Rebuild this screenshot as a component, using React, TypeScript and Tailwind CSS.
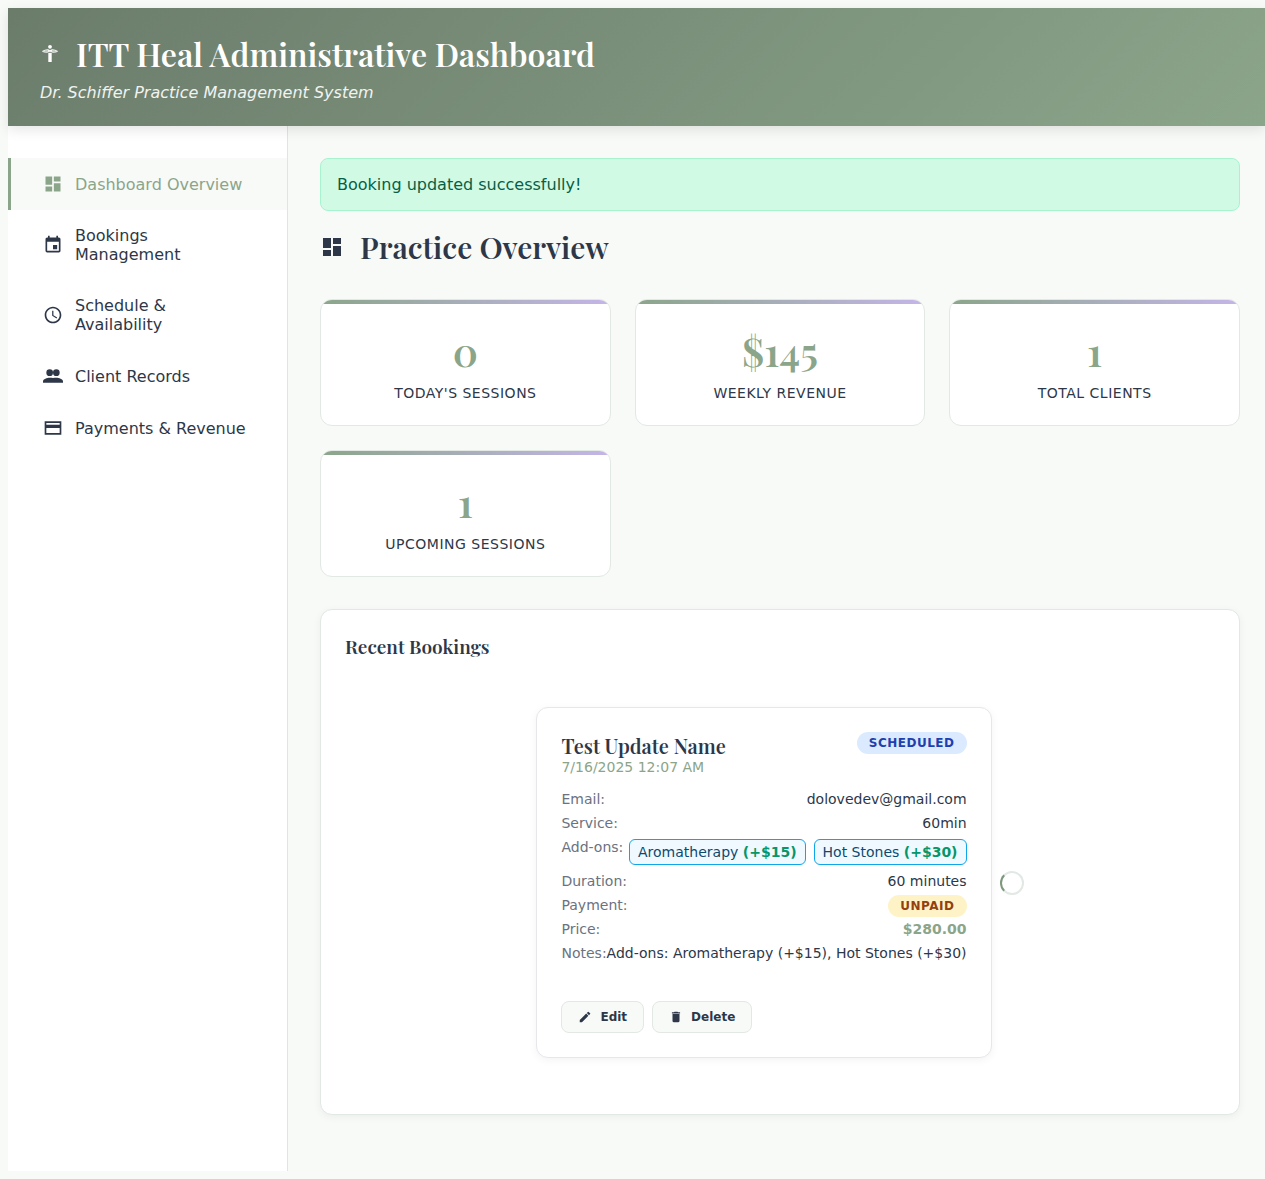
import type { ReactNode } from "react";
import { MdDashboard, MdDelete, MdEdit, MdEvent, MdSchedule } from "react-icons/md";

function HealIcon() {
  return (
    <svg viewBox="0 0 24 24" className="size-6 shrink-0" fill="currentColor" aria-hidden="true">
      <circle cx="10" cy="4.800" r="1.900" />
      <circle cx="10" cy="8.900" r="1.100" />
      <path
        d="M2.500 9.300C4 8.300 6.500 7.700 8.500 7.700v2.200C6.500 10.600 4 10.200 2.500 9.300zM17.500 9.300C16 8.300 13.500 7.700 11.500 7.700v2.200c2 .7 4.500.3 6-.6z"
        fillOpacity="0.45"
        stroke="currentColor"
        strokeWidth="0.9"
      />
      <path d="M8.300 10.800h3.400V20H8.300z" />
    </svg>
  );
}

function PeopleIcon() {
  return (
    <svg viewBox="0 0 24 24" className="size-5 shrink-0" fill="currentColor" aria-hidden="true">
      <circle cx="8" cy="8" r="4" />
      <circle cx="16" cy="8" r="4" />
      <path d="M0 20v-1.500C0 15.500 5 14 8 14c1.400 0 2.800.2 4 .5 1.200-.3 2.600-.5 4-.5 3 0 8 1.500 8 4.500V20z" />
    </svg>
  );
}

function CardIcon() {
  return (
    <svg viewBox="0 0 24 24" className="size-5 shrink-0" fill="currentColor" aria-hidden="true">
      <path
        fillRule="evenodd"
        d="M2 4h20v16H2zM4 6v2h16V6zM4 12v6h16v-6z"
      />
    </svg>
  );
}

const serif = "font-['Playfair_Display','Liberation_Serif',serif]";

const navItems: { label: string; icon: ReactNode; active?: boolean }[] = [
  { label: "Dashboard Overview", icon: <MdDashboard className="size-5 shrink-0" />, active: true },
  { label: "Bookings Management", icon: <MdEvent className="size-5 shrink-0" /> },
  { label: "Schedule & Availability", icon: <MdSchedule className="size-5 shrink-0" /> },
  { label: "Client Records", icon: <PeopleIcon /> },
  { label: "Payments & Revenue", icon: <CardIcon /> },
];

const stats = [
  { value: "0", label: "Today's Sessions" },
  { value: "$145", label: "Weekly Revenue" },
  { value: "1", label: "Total Clients" },
  { value: "1", label: "Upcoming Sessions" },
];

const addOns = [
  { name: "Aromatherapy", price: "(+$15)" },
  { name: "Hot Stones", price: "(+$30)" },
];

function Row({ label, children }: { label: string; children: ReactNode }) {
  return (
    <div className="flex justify-between">
      <dt className="text-[#6b7280]">{label}</dt>
      <dd>{children}</dd>
    </div>
  );
}

function ActionButton({ icon, label }: { icon: ReactNode; label: string }) {
  return (
    <button
      type="button"
      className="flex h-8 items-center gap-2 rounded-lg border border-[#e2e8e4] bg-[#f8faf8] px-4 text-xs font-semibold"
    >
      {icon}
      {label}
    </button>
  );
}

function BookingCard() {
  return (
    <article className="rounded-xl border border-[#e5e7eb] bg-white p-6 text-sm/4 shadow-[0_2px_8px_rgba(0,0,0,0.05)]">
      <div className="mb-4 flex items-start justify-between">
        <div>
          <h4 className={`${serif} text-xl/[27px] font-semibold`}>Test Update Name</h4>
          <p className="text-[#8ba58a]">7/16/2025 12:07 AM</p>
        </div>
        <span className="rounded-full bg-[#dbeafe] px-3 py-1 text-xs/[14px] font-semibold tracking-[0.5px] text-[#1e40af]">
          SCHEDULED
        </span>
      </div>
      <dl className="flex flex-col gap-2">
        <Row label="Email:">dolovedev@gmail.com</Row>
        <Row label="Service:">60min</Row>
        <Row label="Add-ons:">
          <span className="flex gap-2">
            {addOns.map((a) => (
              <span
                key={a.name}
                className="rounded-md border border-[#0ea5e9] bg-[#f0f9ff] px-2 py-1 text-[#0c4a6e]"
              >
                {a.name} <strong className="font-semibold text-[#059669]">{a.price}</strong>
              </span>
            ))}
          </span>
        </Row>
        <Row label="Duration:">60 minutes</Row>
        <Row label="Payment:">
          <span className="rounded-full bg-[#fef3c7] px-3 py-1 text-xs/[14px] font-semibold tracking-[0.5px] text-[#92400e]">
            UNPAID
          </span>
        </Row>
        <Row label="Price:">
          <span className="font-semibold text-[#8ba58a]">$280.00</span>
        </Row>
        <Row label="Notes:">Add-ons: Aromatherapy (+$15), Hot Stones (+$30)</Row>
      </dl>
      <div className="mt-10 flex gap-2">
        <ActionButton icon={<MdEdit className="size-3.5" />} label="Edit" />
        <ActionButton icon={<MdDelete className="size-3.5" />} label="Delete" />
      </div>
    </article>
  );
}

export default function App() {
  return (
    <div className="flex min-h-screen flex-col bg-[#f8faf8] py-2 pl-2 font-['DejaVu_Sans',sans-serif] text-base/[19px] text-[#2d3748]">
      <header className="relative bg-linear-135 from-[#6b7c6b] to-[#8ba58a] px-8 py-6 text-white shadow-[0_4px_12px_rgba(0,0,0,0.1)]">
        <h1 className={`${serif} flex items-center gap-3 text-[32px]/[43px] font-semibold`}>
          <HealIcon />
          ITT Heal Administrative Dashboard
        </h1>
        <p className="mt-2 italic opacity-90">Dr. Schiffer Practice Management System</p>
      </header>

      <div className="flex grow">
        <nav className="w-[280px] shrink-0 border-r border-[#e2e4e3] bg-white pt-8">
          <ul>
            {navItems.map((item) => (
              <li key={item.label}>
                <a
                  href="#"
                  aria-current={item.active ? "page" : undefined}
                  className={`flex items-center gap-3 border-l-3 px-8 py-4 ${
                    item.active
                      ? "border-[#8ba58a] bg-[#f8faf8] text-[#8ba58a]"
                      : "border-transparent"
                  }`}
                >
                  {item.icon}
                  {item.label}
                </a>
              </li>
            ))}
          </ul>
        </nav>

        <main className="min-w-0 grow py-8 pr-[25px] pl-8">
          <div
            role="status"
            className="mb-4 rounded-lg border border-[#a7f3d0] bg-[#d1fae5] p-4 text-[#065f46]"
          >
            Booking updated successfully!
          </div>

          <h2 className={`${serif} mb-8 flex items-center gap-4 text-3xl/10 font-semibold`}>
            <MdDashboard className="size-6" />
            Practice Overview
          </h2>

          <div className="mb-8 grid grid-cols-[repeat(auto-fit,minmax(250px,1fr))] gap-6">
            {stats.map((s) => (
              <div
                key={s.label}
                className="relative overflow-hidden rounded-xl border border-[#e2e8e4] bg-white p-6 text-center"
              >
                <div className="absolute inset-x-0 top-0 h-1 bg-linear-to-r from-[#8ba58a] to-[#c4b5e8]" />
                <div className={`${serif} mb-2 text-[40px]/[53px] font-semibold text-[#8ba58a]`}>
                  {s.value}
                </div>
                <div className="text-sm/4 tracking-[0.5px] uppercase">{s.label}</div>
              </div>
            ))}
          </div>

          <section className="rounded-xl border border-[#e2e8e4] bg-white p-6 shadow-[0_2px_8px_rgba(0,0,0,0.05)]">
            <h3 className={`${serif} mb-4 text-[19px]/[25px] font-semibold`}>Recent Bookings</h3>
            <div className="flex items-center justify-center gap-2 py-8">
              <BookingCard />
              <div
                role="progressbar"
                aria-label="Loading"
                className="size-6 shrink-0 rounded-full border-2 border-[#e2e8e4] border-l-[#7d987c]"
              />
            </div>
          </section>
        </main>
      </div>
    </div>
  );
}
